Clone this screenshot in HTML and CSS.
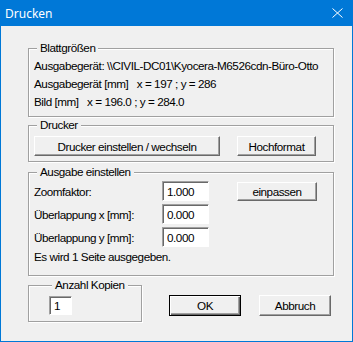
FILE: index.html
```html
<!DOCTYPE html>
<html lang="de">
<head>
 <meta charset="UTF-8">
 <title>Drucken</title>
 <link rel="stylesheet" href="styles.css">
</head>
<body>
 <div class="window">
  <div class="titlebar">
   <span class="title">Drucken</span>
   <svg class="close" width="11" height="10" viewBox="0 0 11 10"><path d="M0.5 0.5L10.5 9.5M10.5 0.5L0.5 9.5" stroke="#fff" stroke-width="1" fill="none"/></svg>
  </div>

  <div class="client">
   <fieldset class="group group-sizes">
    <legend>Blattgrößen</legend>
    <div class="line">Ausgabegerät: \\CIVIL-DC01\Kyocera-M6526cdn-Büro-Otto</div>
    <div class="line">Ausgabegerät [mm]&nbsp;&nbsp; x = 197 ; y = 286</div>
    <div class="line">Bild [mm]&nbsp;&nbsp; x = 196.0 ; y = 284.0</div>
   </fieldset>

   <fieldset class="group group-printer">
    <legend>Drucker</legend>
    <div class="button-row">
     <button class="btn btn-setup">Drucker einstellen / wechseln</button>
     <button class="btn btn-format">Hochformat</button>
    </div>
   </fieldset>

   <fieldset class="group group-output">
    <legend>Ausgabe einstellen</legend>
    <div class="field-row">
     <span class="field-label">Zoomfaktor:</span>
     <input class="edit edit-num" type="text" value="1.000">
     <button class="btn btn-fit">einpassen</button>
    </div>
    <div class="field-row">
     <span class="field-label">Überlappung x [mm]:</span>
     <input class="edit edit-num" type="text" value="0.000">
    </div>
    <div class="field-row">
     <span class="field-label">Überlappung y [mm]:</span>
     <input class="edit edit-num" type="text" value="0.000">
    </div>
    <div class="line info">Es wird 1 Seite ausgegeben.</div>
   </fieldset>

   <div class="bottom-row">
    <fieldset class="group group-copies">
     <legend>Anzahl Kopien</legend>
     <input class="edit edit-copies" type="text" value="1">
    </fieldset>
    <button class="btn btn-dialog btn-default">OK</button>
    <button class="btn btn-dialog">Abbruch</button>
   </div>
  </div>
 </div>
</body>
</html>
```

FILE: styles.css
```css
:root {
 --title-blue: #0078d7;
 --face: #f0f0f0;
 --shadow: #a0a0a0;
 --dark-shadow: #696969;
 --text: #000000;
}

html,
body {
 margin: 0;
 padding: 0;
 width: 353px;
 height: 342px;
 overflow: hidden;
 background: #ffffff;
}

body {
 font-family: "Liberation Sans", Arial, sans-serif;
 font-size: 11.7px;
 letter-spacing: -0.45px;
 color: var(--text);
}

.window {
 width: 353px;
 height: 342px;
 box-sizing: border-box;
 border: 1px solid var(--title-blue);
 border-top: 0;
 background: var(--face);
 display: flex;
 flex-direction: column;
}

/* --- title bar --- */
.titlebar {
 height: 26px;
 margin: 0 -1px;
 background: var(--title-blue);
 display: flex;
 align-items: center;
 justify-content: space-between;
 padding: 0 10px 0 5px;
}

.title {
 font-family: "Noto Sans", "Open Sans", sans-serif;
 font-size: 12px;
 letter-spacing: 0;
 color: #ffffff;
}

.close {
 display: block;
}

/* --- dialog body --- */
.client {
 padding: 15px 18px 0 27px;
}

.group {
 margin: 0;
 padding: 2px 5px 5px 5px;
 border: 1px solid var(--shadow);
 box-shadow: 1px 1px 0 #ffffff, inset 1px 1px 0 #ffffff;
 min-inline-size: 0;
}

.group legend {
 margin-left: 3px;
 padding: 0 3px;
 line-height: 14px;
 background: var(--face);
}

.line {
 line-height: 18px;
 white-space: pre;
}

.group-printer {
 margin-top: 1px;
 padding-top: 4px;
}

.group-output {
 margin-top: 3px;
 padding-bottom: 9px;
}

.button-row {
 display: flex;
 gap: 17px;
}

.field-row {
 display: flex;
 align-items: center;
 height: 20px;
 margin-bottom: 3px;
}

.field-label {
 width: 128px;
}

.info {
 margin-top: -2px;
}

/* --- buttons --- */
.btn {
 font: inherit;
 letter-spacing: inherit;
 color: var(--text);
 background: var(--face);
 height: 20px;
 padding: 0;
 margin: 0;
 border: 1px solid;
 border-color: #ffffff var(--dark-shadow) var(--dark-shadow) #ffffff;
 box-shadow: inset -1px -1px 0 var(--shadow);
 border-radius: 0;
}

.btn-setup {
 width: 186px;
}

.btn-format {
 width: 79px;
}

.btn-fit {
 width: 80px;
 height: 19px;
 margin-left: 28px;
}

/* --- edit fields --- */
.edit {
 font: inherit;
 letter-spacing: inherit;
 color: var(--text);
 background: #ffffff;
 box-sizing: border-box;
 margin: 0;
 padding: 0 0 0 4px;
 border: 1px solid;
 border-color: var(--shadow) #ffffff #ffffff var(--shadow);
 box-shadow: inset 1px 1px 0 var(--dark-shadow);
 border-radius: 0;
 outline: none;
}

.edit-num {
 width: 47px;
 height: 20px;
}

/* --- bottom row --- */
.bottom-row {
 display: flex;
 align-items: flex-start;
 margin-top: 2px;
}

.group-copies {
 width: 114px;
 box-sizing: border-box;
 padding: 4px 0 6px 20px;
}

.edit-copies {
 display: block;
 width: 23px;
 height: 19px;
}

.btn-dialog {
 width: 72px;
 height: 21px;
 margin-top: 17px;
}

.btn-default {
 margin-left: 27px;
 margin-right: 18px;
 border-color: #000000;
 box-shadow: inset 1px 1px 0 #ffffff, inset -1px -1px 0 var(--dark-shadow), inset -2px -2px 0 var(--shadow);
}
```
